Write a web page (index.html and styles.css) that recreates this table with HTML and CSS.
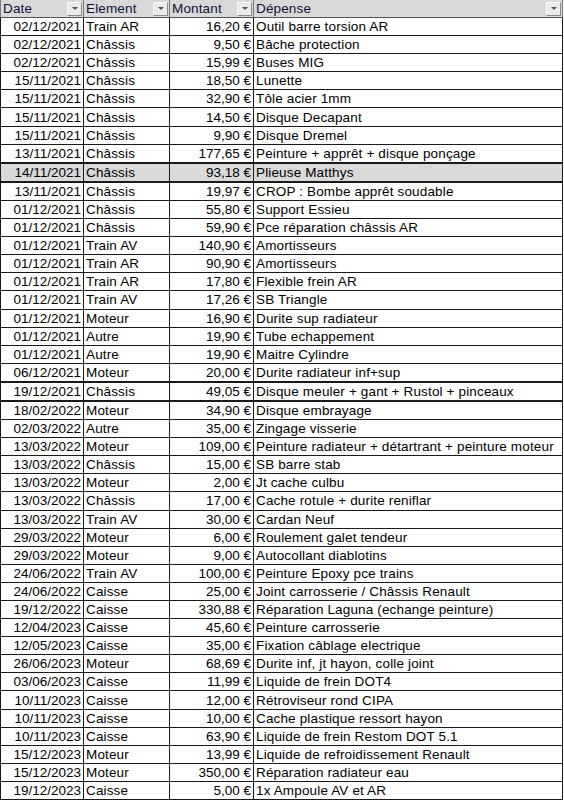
FILE: index.html
```html
<!DOCTYPE html>
<html lang="fr">
<head>
<meta charset="utf-8">
<title>Dépenses</title>
<link rel="stylesheet" href="styles.css">
</head>
<body>
<table class="sheet">
  <colgroup>
    <col class="c-date"><col class="c-elem"><col class="c-mont"><col class="c-dep">
  </colgroup>
  <thead>
    <tr class="head">
      <th><div class="hcell"><span>Date</span><span class="dd"></span></div></th>
      <th><div class="hcell"><span>Element</span><span class="dd"></span></div></th>
      <th><div class="hcell"><span>Montant</span><span class="dd"></span></div></th>
      <th><div class="hcell"><span>Dépense</span><span class="dd"></span></div></th>
    </tr>
  </thead>
  <tbody>
    <tr><td class="r">02/12/2021</td><td>Train AR</td><td class="r">16,20 €</td><td>Outil barre torsion AR</td></tr>
    <tr><td class="r">02/12/2021</td><td>Châssis</td><td class="r">9,50 €</td><td>Bâche protection</td></tr>
    <tr><td class="r">02/12/2021</td><td>Châssis</td><td class="r">15,99 €</td><td>Buses MIG</td></tr>
    <tr><td class="r">15/11/2021</td><td>Châssis</td><td class="r">18,50 €</td><td>Lunette</td></tr>
    <tr><td class="r">15/11/2021</td><td>Châssis</td><td class="r">32,90 €</td><td>Tôle acier 1mm</td></tr>
    <tr><td class="r">15/11/2021</td><td>Châssis</td><td class="r">14,50 €</td><td>Disque Decapant</td></tr>
    <tr><td class="r">15/11/2021</td><td>Châssis</td><td class="r">9,90 €</td><td>Disque Dremel</td></tr>
    <tr class="thick-b"><td class="r">13/11/2021</td><td>Châssis</td><td class="r">177,65 €</td><td>Peinture + apprêt + disque ponçage</td></tr>
    <tr class="sel thick-b"><td class="r">14/11/2021</td><td>Châssis</td><td class="r">93,18 €</td><td>Plieuse Matthys</td></tr>
    <tr><td class="r">13/11/2021</td><td>Châssis</td><td class="r">19,97 €</td><td>CROP : Bombe apprêt soudable</td></tr>
    <tr><td class="r">01/12/2021</td><td>Châssis</td><td class="r">55,80 €</td><td>Support Essieu</td></tr>
    <tr><td class="r">01/12/2021</td><td>Châssis</td><td class="r">59,90 €</td><td>Pce réparation châssis AR</td></tr>
    <tr><td class="r">01/12/2021</td><td>Train AV</td><td class="r">140,90 €</td><td>Amortisseurs</td></tr>
    <tr><td class="r">01/12/2021</td><td>Train AR</td><td class="r">90,90 €</td><td>Amortisseurs</td></tr>
    <tr><td class="r">01/12/2021</td><td>Train AR</td><td class="r">17,80 €</td><td>Flexible frein AR</td></tr>
    <tr><td class="r">01/12/2021</td><td>Train AV</td><td class="r">17,26 €</td><td>SB Triangle</td></tr>
    <tr><td class="r">01/12/2021</td><td>Moteur</td><td class="r">16,90 €</td><td>Durite sup radiateur</td></tr>
    <tr><td class="r">01/12/2021</td><td>Autre</td><td class="r">19,90 €</td><td>Tube echappement</td></tr>
    <tr><td class="r">01/12/2021</td><td>Autre</td><td class="r">19,90 €</td><td>Maitre Cylindre</td></tr>
    <tr class="thick-b"><td class="r">06/12/2021</td><td>Moteur</td><td class="r">20,00 €</td><td>Durite radiateur inf+sup</td></tr>
    <tr class="thick-b"><td class="r">19/12/2021</td><td>Châssis</td><td class="r">49,05 €</td><td>Disque meuler + gant + Rustol + pinceaux</td></tr>
    <tr><td class="r">18/02/2022</td><td>Moteur</td><td class="r">34,90 €</td><td>Disque embrayage</td></tr>
    <tr><td class="r">02/03/2022</td><td>Autre</td><td class="r">35,00 €</td><td>Zingage visserie</td></tr>
    <tr><td class="r">13/03/2022</td><td>Moteur</td><td class="r">109,00 €</td><td>Peinture radiateur + détartrant + peinture moteur</td></tr>
    <tr><td class="r">13/03/2022</td><td>Châssis</td><td class="r">15,00 €</td><td>SB barre stab</td></tr>
    <tr><td class="r">13/03/2022</td><td>Moteur</td><td class="r">2,00 €</td><td>Jt cache culbu</td></tr>
    <tr><td class="r">13/03/2022</td><td>Châssis</td><td class="r">17,00 €</td><td>Cache rotule + durite reniflar</td></tr>
    <tr><td class="r">13/03/2022</td><td>Train AV</td><td class="r">30,00 €</td><td>Cardan Neuf</td></tr>
    <tr><td class="r">29/03/2022</td><td>Moteur</td><td class="r">6,00 €</td><td>Roulement galet tendeur</td></tr>
    <tr><td class="r">29/03/2022</td><td>Moteur</td><td class="r">9,00 €</td><td>Autocollant diablotins</td></tr>
    <tr><td class="r">24/06/2022</td><td>Train AV</td><td class="r">100,00 €</td><td>Peinture Epoxy pce trains</td></tr>
    <tr><td class="r">24/06/2022</td><td>Caisse</td><td class="r">25,00 €</td><td>Joint carrosserie / Châssis Renault</td></tr>
    <tr><td class="r">19/12/2022</td><td>Caisse</td><td class="r">330,88 €</td><td>Réparation Laguna (echange peinture)</td></tr>
    <tr><td class="r">12/04/2023</td><td>Caisse</td><td class="r">45,60 €</td><td>Peinture carrosserie</td></tr>
    <tr><td class="r">12/05/2023</td><td>Caisse</td><td class="r">35,00 €</td><td>Fixation câblage electrique</td></tr>
    <tr><td class="r">26/06/2023</td><td>Moteur</td><td class="r">68,69 €</td><td>Durite inf, jt hayon, colle joint</td></tr>
    <tr><td class="r">03/06/2023</td><td>Caisse</td><td class="r">11,99 €</td><td>Liquide de frein DOT4</td></tr>
    <tr><td class="r">10/11/2023</td><td>Caisse</td><td class="r">12,00 €</td><td>Rétroviseur rond CIPA</td></tr>
    <tr><td class="r">10/11/2023</td><td>Caisse</td><td class="r">10,00 €</td><td>Cache plastique ressort hayon</td></tr>
    <tr><td class="r">10/11/2023</td><td>Caisse</td><td class="r">63,90 €</td><td>Liquide de frein Restom DOT 5.1</td></tr>
    <tr><td class="r">15/12/2023</td><td>Moteur</td><td class="r">13,99 €</td><td>Liquide de refroidissement Renault</td></tr>
    <tr><td class="r">15/12/2023</td><td>Moteur</td><td class="r">350,00 €</td><td>Réparation radiateur eau</td></tr>
    <tr><td class="r">19/12/2023</td><td>Caisse</td><td class="r">5,00 €</td><td>1x Ampoule AV et AR</td></tr>
  </tbody>
</table>
</body>
</html>
```
FILE: styles.css
```css
html, body {
  margin: 0;
  padding: 0;
  background: #ffffff;
}
.sheet {
  border-collapse: collapse;
  table-layout: fixed;
  width: 562px;
  font-family: "Liberation Sans", Arial, sans-serif;
  font-size: 13.5px;
  color: #000;
}
.c-date { width: 83px; }
.c-elem { width: 86px; }
.c-mont { width: 84px; }
.c-dep { width: 309px; }

.head th {
  background: #d9d9d9;
  font-weight: normal;
  text-align: left;
  padding: 0;
  height: 17px;
  border-left: 1px solid #7a7a7a;
  border-right: 1px solid #7a7a7a;
  border-bottom: 1px solid #555;
  color: #10103a;
}
.hcell {
  display: flex;
  align-items: center;
  justify-content: space-between;
  height: 17px;
  padding-left: 2px;
  line-height: 17px;
  letter-spacing: 0.15px;
}
.dd {
  width: 15px;
  height: 14px;
  box-sizing: border-box;
  background: #ebebeb;
  border-top: 1px solid #fafafa;
  border-left: 1px solid #fafafa;
  border-right: 1px solid #8a8a8a;
  border-bottom: 1px solid #8a8a8a;
  margin-right: 1px;
  display: flex;
  align-items: center;
  justify-content: center;
}
.dd::after {
  content: "";
  width: 0;
  height: 0;
  border-left: 3px solid transparent;
  border-right: 3px solid transparent;
  border-top: 3px solid #555;
}

tbody td {
  border: 1px solid #1a1a1a;
  height: 17.1px;
  padding: 0 2px;
  line-height: 17px;
  white-space: nowrap;
  overflow: hidden;
  letter-spacing: 0.15px;
}
td.r {
  text-align: right;
  letter-spacing: 0;
}

tr.sel td { background: #d9d9d9; }
tr.thick-b td { border-bottom-width: 2px; }
```
